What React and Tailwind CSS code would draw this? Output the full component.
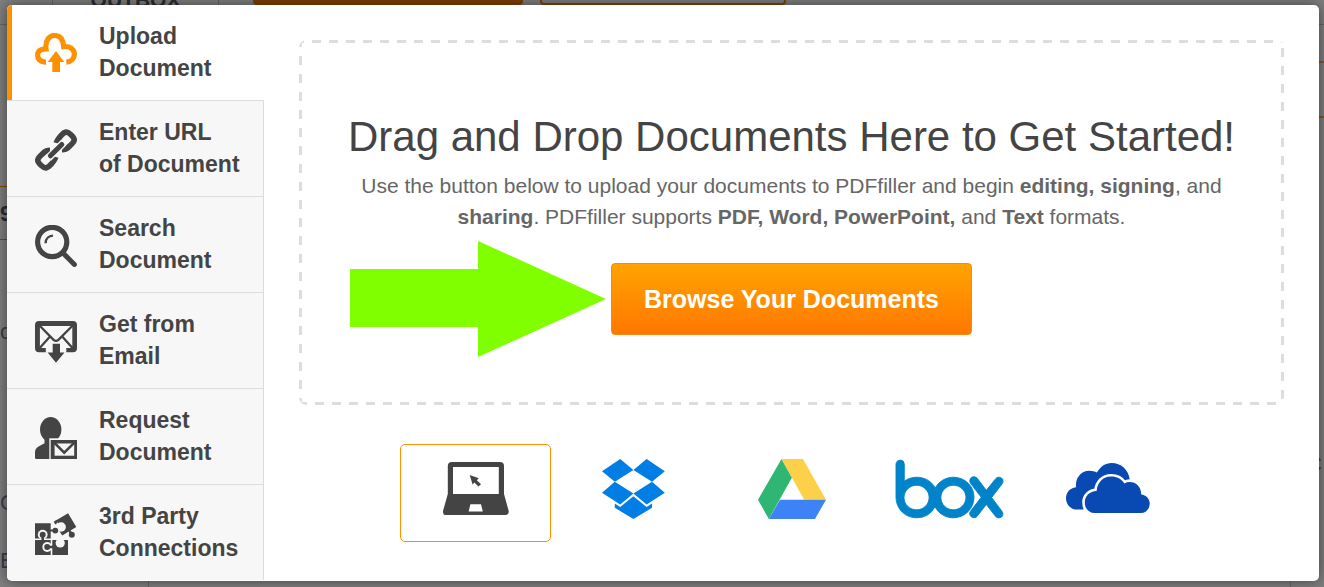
import { useState } from "react";
import { SiBox } from "react-icons/si";

const UploadIcon = () => (
  <svg viewBox="0 0 42 42" className="h-[42px] w-[42px]" fill="none">
    <path
      d="M11 29.2H10.3C5.6 28.6 2.6 26 2.6 22C2.6 18 5.8 15.8 11 15.8C10 7.5 14.2 2.5 19.7 2.5C24.6 2.5 28 5.8 28.7 13.6C35 12.8 39.4 16.4 39.4 21.3C39.4 25.6 36.2 28.9 31.3 29.2"
      stroke="#ff9100"
      strokeWidth="5.2"
    />
    <path d="M21 18L29.3 29H25V39H17.3V29H12.7Z" fill="#ff9100" />
  </svg>
);

const LinkIcon = () => (
  <svg viewBox="0 0 42 42" className="h-[42px] w-[42px]" fill="none" stroke="#444" strokeWidth="5.6">
    <path d="M21.2 14C21.8 12 23.4 9.6 26 6.6C29.6 2.4 32 2 35.4 5.2C40 9.4 40.4 11.4 37 14.8L33.5 18.1C31.5 20 29.5 20.6 27 20.6" />
    <path d="M20.8 28C20.2 30 18.6 32.4 16 35.4C12.4 39.6 10 40 6.6 36.8C2 32.6 1.6 30.6 5 27.2L8.5 23.9C10.5 22 12.5 21.4 15 21.4" />
    <path d="M13.4 29L28.6 13.8" stroke="#f7f7f7" strokeWidth="7.6" />
    <path d="M15.4 26.8L26.8 15.4" strokeWidth="5" strokeLinecap="round" />
  </svg>
);

const SearchIcon = () => (
  <svg viewBox="0 0 42 42" className="h-[42px] w-[42px]" fill="none" stroke="#444">
    <circle cx="17.2" cy="17" r="14.6" strokeWidth="5.2" />
    <path d="M28.5 28.5L39.4 39.4" strokeWidth="5" strokeLinecap="round" />
    <path d="M10.6 18.2C10.6 14 13.6 10.8 18 10.6" strokeWidth="2.4" />
  </svg>
);

const EmailIcon = () => (
  <svg viewBox="0 0 42 42" className="h-[42px] w-[42px]" fill="none">
    <path
      d="M4 0H38Q42 0 42 4V27.3Q42 31.3 38 31.3H31.3V27H37.3V5H4.9V27H10.8V31.3H4Q0 31.3 0 27.3V4Q0 0 4 0Z"
      fill="#444"
    />
    <path d="M4.5 4.5L18.6 18.8Q21 21 23.4 18.8L37.7 4.5M4.5 27.3L15 15.6M37.7 27.3L27.2 15.6" stroke="#444" strokeWidth="2.3" />
    <path d="M17.7 22.8H25V31.4H29.5L21 41.8L12.6 31.4H17.7Z" fill="#444" />
  </svg>
);

const RequestIcon = () => (
  <svg viewBox="0 0 42 42" className="h-[42px] w-[42px]">
    <ellipse cx="15.7" cy="12.5" rx="10.7" ry="12.5" fill="#444" />
    <path d="M1.5 42Q0 42 0 40.5V35.5C0 32.5 1 31 4 29.2L9.5 26.2V20H22V42Z" fill="#444" />
    <path d="M14.3 21.3H42V42H14.3Z" fill="#f7f7f7" />
    <path d="M15.7 23H42V42H15.7Z" fill="#444" />
    <path d="M19.6 26.5H39.2V38.7H19.6Z" fill="#f7f7f7" />
    <path d="M19 25.4L29.2 35.6L39.6 25.4" fill="none" stroke="#444" strokeWidth="2.6" />
  </svg>
);

const PuzzleIcon = () => (
  <svg viewBox="0 0 42 42" className="h-[42px] w-[42px]" fill="#444">
    <path d="M0 10.3H15.7V25.4H0ZM0 27H15.7V42H0ZM17.3 27H33V42H17.3ZM18.7 8.7L33.1 .3L41.3 14L27.2 22.4Z" />
    <g fill="#f7f7f7">
      <circle cx="7.7" cy="21.6" r="4.9" />
      <circle cx="12.2" cy="34" r="4.9" />
      <circle cx="25.2" cy="30" r="4.6" />
      <circle cx="26.2" cy="14" r="4.7" />
      <path d="M18 9L21 7.5L27 14L22 19Z" />
    </g>
    <path d="M18.7 8.7L22 6.8L22.6 9.8L20.4 11.4Z" />
    <circle cx="20.3" cy="17.6" r="2.9" />
    <path d="M15 16.6H19V18.6H15Z" />
    <circle cx="7.7" cy="21.8" r="3" />
    <path d="M6.4 22H9V28H6.4Z" />
    <circle cx="12.2" cy="34" r="3" />
    <path d="M12 32.7H18V35.3H12Z" />
    <circle cx="36.8" cy="21.7" r="3" />
    <path d="M33 17.5L35 16.5L38 21L35.5 22.2Z" />
  </svg>
);

const LaptopLogo = () => (
  <svg viewBox="0 0 66 54" className="h-[54px] w-[66px]" fill="#444">
    <path d="M9 0H57Q61 0 61 4V32L65.7 49Q66 53 62.5 53H3.2Q-.3 53 0 49L4.8 32V4Q4.8 0 9 0Z" />
    <path d="M10 5H55.8V32H10Z" fill="#fff" />
    <path d="M27.4 42.2H38L39.8 49.6H25.6Z" fill="#fff" />
    <path d="M26.7 13L35.8 16.2L33.8 18.2L38 22.2L35.5 24.6L31.4 20.6L29.6 22.4Z" />
  </svg>
);

const DropboxLogo = () => (
  <svg viewBox="0 0 63 60" className="h-[60px] w-[63px]" fill="#007ee5">
    <path d="M18.2 0L31.4 11L12.8 22.7L0 12.3Z" />
    <path d="M44.6 0L62.8 12.3L50 22.7L31.4 11Z" />
    <path d="M12.8 22.7L31.4 34.5L18.2 45.6L0 33.7Z" />
    <path d="M50 22.7L62.8 33.7L44.6 45.6L31.4 34.5Z" />
    <path d="M31.4 37.2L44.6 48L50 44.6V48.8L31.4 60L12.8 48.8V44.6L18.2 48Z" />
  </svg>
);

const DriveLogo = () => (
  <svg viewBox="0 0 68 60" className="h-[60px] w-[68px]">
    <path d="M23.5 0L34 18.5L10.8 60L0 40.7Z" fill="#2fb673" />
    <path d="M23.5 0H45L68 40.7H46.2Z" fill="#fdd04a" />
    <path d="M22 40.7H68L57 60H10.8Z" fill="#3e82f7" />
  </svg>
);

const BoxLogo = () => (
  <SiBox
    preserveAspectRatio="xMidYMid slice"
    stroke="currentColor"
    strokeWidth="0.2"
    className="h-[60px] w-[107px] overflow-visible text-[#0083c8]"
  />
);

const OneDriveLogo = () => (
  <svg viewBox="0 0 84 52" className="h-[52px] w-[84px]" fill="#094ab2">
    <path d="M17.3 46.6H11C4.5 46.6 0 41.2 0 35.2C0 29.6 4 24.8 10 24.2C9 15.2 14.8 7.7 23.4 7.7C26.3 7.7 28.8 8.4 31 9.6C34 3.8 39.2 0 45.6 0C55 0 62.4 6.6 63.8 16.4L50 40H20Z" />
    <path
      d="M28.6 50C22.4 50 18.8 45 18.8 39.4C18.8 33 23.8 28.2 30.6 28C31.4 19.6 37 13.6 45 13.6C50.8 13.6 55.6 16.2 58.3 20.4C66 16.4 75.4 21.6 75.2 31.4C80.2 31.8 83.7 35.8 83.7 40.4C83.7 46 79.8 50 75 50Z"
      stroke="#fff"
      strokeWidth="5.2"
      paintOrder="stroke"
    />
  </svg>
);

const tabs = [
  { id: "upload", lines: ["Upload", "Document"], Icon: UploadIcon },
  { id: "url", lines: ["Enter URL", "of Document"], Icon: LinkIcon },
  { id: "search", lines: ["Search", "Document"], Icon: SearchIcon },
  { id: "email", lines: ["Get from", "Email"], Icon: EmailIcon },
  { id: "request", lines: ["Request", "Document"], Icon: RequestIcon },
  { id: "connections", lines: ["3rd Party", "Connections"], Icon: PuzzleIcon },
];

const sources = [
  { id: "computer", label: "My computer", Logo: LaptopLogo },
  { id: "dropbox", label: "Dropbox", Logo: DropboxLogo },
  { id: "drive", label: "Google Drive", Logo: DriveLogo },
  { id: "box", label: "Box", Logo: BoxLogo },
  { id: "onedrive", label: "OneDrive", Logo: OneDriveLogo },
];

// dimmed page under the dialog
function PageBehind() {
  return (
    <div aria-hidden="true" className="absolute inset-0 flex flex-col overflow-hidden bg-[#7f7f7f] text-[#2b2d31]">
      <div className="-mt-[60px] flex h-[85px] shrink-0 border-b border-[#666]">
        <div className="w-[53px] border-r border-[#666]" />
        <div className="flex w-[166px] justify-center border-r border-[#666] pt-[48px] text-[21px] font-bold leading-[24px]">
          OUTBOX
        </div>
        <div className="ml-[34px] h-[65px] w-[270px] rounded-[4px] bg-[#7f3f04]" />
        <div className="ml-[17px] h-[65px] w-[246px] rounded-[4px] border-2 border-[#7f4500]" />
      </div>
      <div className="flex grow justify-between">
        <div className="flex w-[149px] flex-col border-r border-[#666] pt-[161px] text-[22px]">
          <div className="flex h-[54px] items-center border-y border-[#7f4a00] font-bold">9</div>
          <div className="flex h-[182px] items-center text-[#3a3f4a]">o</div>
          <div className="mt-[51px] flex h-[58px] items-center text-[#3a3f4a]">C</div>
          <div className="flex h-[58px] items-center text-[#3a3f4a]">E</div>
        </div>
        <div className="w-[34px] border-l border-[#666] pt-[36px]">
          <div className="h-[57px] border-y-2 border-[#80592b]" />
          <div className="mt-[334px] pr-[2px] text-right text-[20px] leading-[24px] text-[#3a3f4a]">C</div>
        </div>
      </div>
    </div>
  );
}

export default function App() {
  const [activeTab, setActiveTab] = useState("upload");
  const [source, setSource] = useState("computer");

  return (
    <div className="relative flex min-h-screen flex-col pb-[6px] pl-[7px] pr-[5px] pt-[5px] font-['Liberation_Sans',Arial,sans-serif]">
      <PageBehind />

      <div
        role="dialog"
        aria-label="Add a document"
        className="relative flex grow overflow-hidden rounded-[5px] bg-white shadow-[0_0_14px_rgba(0,0,0,0.5)]"
      >
        <nav className="flex w-[257px] shrink-0 flex-col">
          {tabs.map(({ id, lines, Icon }) => (
            <button
              key={id}
              type="button"
              onClick={() => setActiveTab(id)}
              className={
                "flex items-center gap-[22px] border-[#dcdcdc] pb-[16px] pt-[15px] text-left text-[23px] font-bold leading-[32px] text-[#444] not-first:border-t " +
                (activeTab === id
                  ? "border-l-[5px] border-l-[#ff9100] bg-white pl-[23px]"
                  : "border-r bg-[#f7f7f7] pl-[28px]")
              }
            >
              <span className="pt-1">
                <Icon />
              </span>
              <span>
                {lines[0]}
                <br />
                {lines[1]}
              </span>
            </button>
          ))}
        </nav>

        <main className="flex grow flex-col px-[35px] pb-[39px] pt-[35px]">
          {/* wide dashes, spaced further apart than border-dashed does */}
          <section className="flex flex-col items-center rounded-[8px] bg-[image:linear-gradient(90deg,#ddd_9px,transparent_9px),linear-gradient(90deg,#ddd_9px,transparent_9px),linear-gradient(180deg,#ddd_9px,transparent_9px),linear-gradient(180deg,#ddd_9px,transparent_9px)] bg-[length:17px_3px,17px_3px,3px_18px,3px_18px] bg-[position:13px_0,16px_100%,0_16px,100%_8px] pb-[70px] pt-[73px] text-center [background-repeat:repeat-x,repeat-x,repeat-y,repeat-y]">
            <h1 className="text-[42px] leading-[48px] text-[#444]">
              Drag and Drop Documents Here to Get Started!
            </h1>
            <p className="mt-[9px] max-w-[900px] text-[21px] leading-[31px] text-[#666]">
              Use the button below to upload your documents to PDFfiller and begin{" "}
              <b>editing, signing</b>, and <b>sharing</b>. PDFfiller supports{" "}
              <b>PDF, Word, PowerPoint,</b> and <b>Text</b> formats.
            </p>
            <div className="relative mt-[31px]">
              <svg
                viewBox="0 0 256 116"
                className="absolute right-full top-1/2 mr-[5px] h-[116px] w-[256px] -translate-y-1/2"
                fill="#80ff00"
              >
                <path d="M0 28H128V0L256 58L128 116V86H0Z" />
              </svg>
              <button
                type="button"
                className="h-[72px] w-[361px] rounded-[4px] border border-[#ff8412] bg-linear-to-b from-[#ffa300] to-[#ff7700] pt-[2px] text-[25px] font-bold text-white"
              >
                Browse Your Documents
              </button>
            </div>
          </section>

          <div className="mt-[39px] flex justify-center gap-[7px]">
            {sources.map(({ id, label, Logo }) => (
              <button
                key={id}
                type="button"
                aria-label={label}
                onClick={() => setSource(id)}
                className={
                  "flex h-[98px] w-[151px] items-center justify-center rounded-[5px] border pb-[8px] " +
                  (source === id ? "border-[#ff9100]" : "border-transparent")
                }
              >
                <Logo />
              </button>
            ))}
          </div>
        </main>
      </div>
    </div>
  );
}
